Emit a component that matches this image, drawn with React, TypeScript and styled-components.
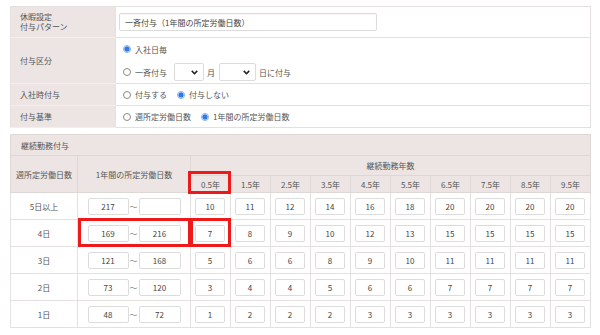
import React from "react";
import styled, { createGlobalStyle } from "styled-components";

const Global = createGlobalStyle`
  html, body { margin: 0; padding: 0; background: #fff; }
  body {
    font-family: "Noto Sans CJK JP", "Noto Sans", sans-serif;
    font-size: 8px;
    line-height: 11px;
    color: #555;
  }
`;

const Page = styled.div`
  width: 600px;
  height: 335px;
  box-sizing: border-box;
  padding: 6px 9px 0 10px;
  display: flex;
  flex-direction: column;
  gap: 6px;
  overflow: hidden;
`;

const Table = styled.table`
  width: 581px;
  border-collapse: collapse;
  table-layout: fixed;
  border: 1px solid #e4e0df;
`;

const Label = styled.td`
  background: #ece5e3;
  border: 1px solid #e4e0df;
  border-bottom-color: #f4efee;
  padding: 0 0 0 9px;
  line-height: 10px;
  vertical-align: middle;
`;

const Value = styled.td<{ $pad?: string }>`
  border: 1px solid #e4e0df;
  padding: ${(p) => p.$pad ?? "0 7px"};
  vertical-align: middle;
`;

const Row = styled.tr<{ $h: number }>`
  height: ${(p) => p.$h}px;
`;

const TextInput = styled.div<{ $w: number }>`
  width: ${(p) => p.$w}px;
  height: 18px;
  box-sizing: border-box;
  border: 1px solid #dcdcdc;
  border-radius: 2px;
  box-shadow: inset 0 1px 1px rgba(0, 0, 0, 0.04);
  background: #fff;
  display: flex;
  align-items: center;
  padding-left: 5px;
  color: #444;
`;

const Line = styled.div<{ $h?: number }>`
  display: flex;
  align-items: center;
  height: ${(p) => p.$h ?? 14}px;
`;

const Stack = styled.div`
  display: flex;
  flex-direction: column;
  gap: 7px;
  padding: 4px 0 2px;
`;

const RadioDot = styled.span<{ $on?: boolean }>`
  width: 8px;
  height: 8px;
  box-sizing: border-box;
  border-radius: 50%;
  flex: none;
  margin-right: 4px;
  border: 1px solid ${(p) => (p.$on ? "#8db8f2" : "#8a8a8a")};
  background: ${(p) =>
    p.$on ? "radial-gradient(circle, #2f7ae6 0 2.3px, #cfe0fa 2.8px)" : "#fff"};
`;

const Opt = styled.span<{ $gap: number }>`
  display: inline-flex;
  align-items: center;
  margin-right: ${(p) => p.$gap}px;
  color: #555;
`;

const SelectBox = styled.div<{ $w: number }>`
  width: ${(p) => p.$w}px;
  height: 18px;
  box-sizing: border-box;
  border: 1px solid #dcdcdc;
  border-radius: 2px;
  background: #fff;
  display: flex;
  align-items: center;
  justify-content: flex-end;
  padding-right: 5px;
  margin: 0 3px 0 4px;
`;

const Chevron = () => (
  <svg width="7" height="5" viewBox="0 0 7 5">
    <path d="M0.8 0.9 L3.5 3.7 L6.2 0.9" fill="none" stroke="#222" strokeWidth="1.6" />
  </svg>
);

const Radio: React.FC<{ on?: boolean; gap?: number; children: React.ReactNode }> = ({
  on,
  gap = 10,
  children,
}) => (
  <Opt $gap={gap}>
    <RadioDot $on={on} />
    {children}
  </Opt>
);

/* ---- second table ---- */

const HeadCell = styled.th<{ $left?: boolean }>`
  background: #ece5e3;
  border: 1px solid #ddd8d6;
  font-weight: normal;
  color: #555;
  text-align: ${(p) => (p.$left ? "left" : "center")};
  padding: ${(p) => (p.$left ? "0 0 0 10px" : "0")};
  vertical-align: middle;
  position: relative;
`;

const Cell = styled.td`
  border: 1px solid #e4e0df;
  text-align: center;
  vertical-align: middle;
  padding: 0;
  position: relative;
`;

const Mark = styled.span<{ $t: number; $r: number; $b: number; $l: number }>`
  position: absolute;
  top: ${(p) => p.$t}px;
  right: ${(p) => p.$r}px;
  bottom: ${(p) => p.$b}px;
  left: ${(p) => p.$l}px;
  border: 3px solid #ee1a1a;
  pointer-events: none;
  z-index: 2;
`;

const NumBox = styled.div<{ $w: number }>`
  width: ${(p) => p.$w}px;
  height: 17px;
  box-sizing: border-box;
  border: 1px solid #dcdcdc;
  border-radius: 2px;
  background: #fff;
  display: flex;
  align-items: center;
  justify-content: center;
  color: #444;
`;

const Range = styled.div`
  display: flex;
  align-items: center;
  justify-content: center;
`;

const Tilde = styled.span`
  width: 10px;
  text-align: center;
  color: #888;
`;

const YearWrap = styled.div`
  display: flex;
  justify-content: center;
  padding-right: 1px;
`;

const years = ["0.5年", "1.5年", "2.5年", "3.5年", "4.5年", "5.5年", "6.5年", "7.5年", "8.5年", "9.5年"];

const rows: { label: string; from: string; to: string; v: number[] }[] = [
  { label: "5日以上", from: "217", to: "", v: [10, 11, 12, 14, 16, 18, 20, 20, 20, 20] },
  { label: "4日", from: "169", to: "216", v: [7, 8, 9, 10, 12, 13, 15, 15, 15, 15] },
  { label: "3日", from: "121", to: "168", v: [5, 6, 6, 8, 9, 10, 11, 11, 11, 11] },
  { label: "2日", from: "73", to: "120", v: [3, 4, 4, 5, 6, 6, 7, 7, 7, 7] },
  { label: "1日", from: "48", to: "72", v: [1, 2, 2, 2, 3, 3, 3, 3, 3, 3] },
];

export default function App() {
  return (
    <>
      <Global />
      <Page>
        <Table>
          <colgroup>
            <col style={{ width: 105 }} />
            <col />
          </colgroup>
          <tbody>
            <Row $h={31}>
              <Label>
                休暇設定
                <br />
                付与パターン
              </Label>
              <Value $pad="0 3px">
                <TextInput $w={258}>一斉付与（1年間の所定労働日数）</TextInput>
              </Value>
            </Row>
            <Row $h={46}>
              <Label>付与区分</Label>
              <Value>
                <Stack>
                  <Line>
                    <Radio on>入社日毎</Radio>
                  </Line>
                  <Line $h={18}>
                    <Radio gap={3}>一斉付与</Radio>
                    <SelectBox $w={30}>
                      <Chevron />
                    </SelectBox>
                    月
                    <SelectBox $w={37}>
                      <Chevron />
                    </SelectBox>
                    日に付与
                  </Line>
                </Stack>
              </Value>
            </Row>
            <Row $h={22}>
              <Label>入社時付与</Label>
              <Value>
                <Line>
                  <Radio>付与する</Radio>
                  <Radio on>付与しない</Radio>
                </Line>
              </Value>
            </Row>
            <Row $h={22}>
              <Label>付与基準</Label>
              <Value>
                <Line>
                  <Radio>週所定労働日数</Radio>
                  <Radio on>1年間の所定労働日数</Radio>
                </Line>
              </Value>
            </Row>
          </tbody>
        </Table>

        <Table>
          <colgroup>
            <col style={{ width: 67 }} />
            <col style={{ width: 113 }} />
            {years.map((y) => (
              <col key={y} />
            ))}
          </colgroup>
          <thead>
            <Row $h={21}>
              <HeadCell $left colSpan={12}>
                継続勤務付与
              </HeadCell>
            </Row>
            <Row $h={20}>
              <HeadCell rowSpan={2}>週所定労働日数</HeadCell>
              <HeadCell rowSpan={2}>1年間の所定労働日数</HeadCell>
              <HeadCell colSpan={10}>継続勤務年数</HeadCell>
            </Row>
            <Row $h={17}>
              {years.map((y, i) => (
                <HeadCell key={y}>
                  {y}
                  {i === 0 && <Mark $t={-5} $r={-1} $b={-2} $l={-3} />}
                </HeadCell>
              ))}
            </Row>
          </thead>
          <tbody>
            {rows.map((r, ri) => (
              <Row $h={27} key={r.label}>
                <Cell>{r.label}</Cell>
                <Cell>
                  <Range>
                    <NumBox $w={41}>{r.from}</NumBox>
                    <Tilde>〜</Tilde>
                    <NumBox $w={42}>{r.to}</NumBox>
                  </Range>
                  {ri === 1 && <Mark $t={-2} $r={-1} $b={-1} $l={0} />}
                </Cell>
                {r.v.map((n, i) => (
                  <Cell key={i}>
                    <YearWrap>
                      <NumBox $w={30}>{n}</NumBox>
                    </YearWrap>
                    {ri === 1 && i === 0 && <Mark $t={-2} $r={-1} $b={-1} $l={-1} />}
                  </Cell>
                ))}
              </Row>
            ))}
          </tbody>
        </Table>
      </Page>
    </>
  );
}
